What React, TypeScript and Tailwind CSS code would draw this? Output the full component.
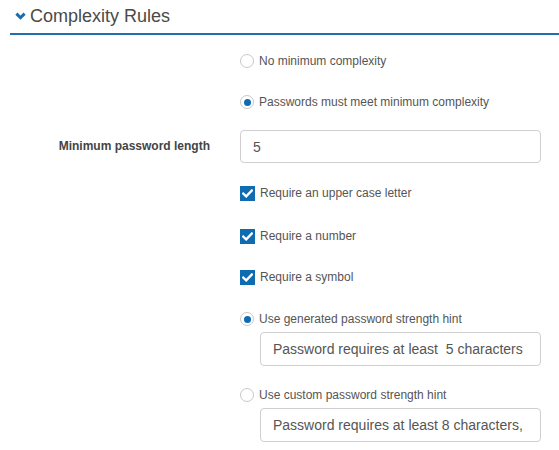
import React from "react";

const Radio = ({ checked }: { checked?: boolean }) => (
  <span className="flex h-[14px] w-[14px] shrink-0 items-center justify-center rounded-full border border-[#c8c8c8] bg-white">
    {checked && <span className="h-[7px] w-[7px] rounded-full bg-[#0b6cb3]" />}
  </span>
);

const Check = () => (
  <span className="flex h-[15px] w-[15px] shrink-0 items-center justify-center bg-[#0f6cb0]">
    <svg width="11" height="9" viewBox="0 0 11 9">
      <path d="M1.2 4.6 L4.2 7.4 L9.8 1.6" fill="none" stroke="#fff" strokeWidth="2.4" strokeLinecap="square" />
    </svg>
  </span>
);

const Row = ({ children, className = "" }: { children: React.ReactNode; className?: string }) => (
  <div className={`flex h-[20px] items-center gap-[5px] pl-[240px] text-[12px] text-[#555] ${className}`}>{children}</div>
);

export default function App() {
  return (
    <div className="h-[450px] w-[559px] overflow-hidden bg-white" style={{ fontFamily: '"Liberation Sans", Arial, sans-serif' }}>
      <div className="ml-[10px] flex h-[35px] items-center gap-[4px] border-b-2 border-[#1e70b2] pb-[2px] pl-[5px]">
        <svg width="11" height="8" viewBox="0 0 11 8" className="mt-[1px]">
          <path d="M1.4 1.6 L5.5 5.7 L9.6 1.6" fill="none" stroke="#1a6cb0" strokeWidth="3" />
        </svg>
        <span className="text-[18px] leading-none text-[#4a4a4a]">Complexity Rules</span>
      </div>

      <Row className="mt-[16px]">
        <Radio />
        <span>No minimum complexity</span>
      </Row>
      <Row className="mt-[21px]">
        <Radio checked />
        <span>Passwords must meet minimum complexity</span>
      </Row>

      <div className="mt-[18px] flex items-start">
        <label className="w-[210px] pt-[7px] text-right text-[12px] font-bold text-[#444]">Minimum password length</label>
        <input
          readOnly
          value="5"
          className="ml-[30px] h-[33px] w-[301px] rounded-[4px] border border-[#cfcfcf] px-3 text-[14px] text-[#555] outline-none"
        />
      </div>

      <Row className="mt-[20px]">
        <Check />
        <span>Require an upper case letter</span>
      </Row>
      <Row className="mt-[23px]">
        <Check />
        <span>Require a number</span>
      </Row>
      <Row className="mt-[21px]">
        <Check />
        <span>Require a symbol</span>
      </Row>

      <Row className="mt-[22px]">
        <Radio checked />
        <span>Use generated password strength hint</span>
      </Row>
      <div className="mt-[3px] pl-[260px]">
        <input
          readOnly
          value="Password requires at least  5 characters"
          className="h-[34px] w-[281px] rounded-[4px] border border-[#cfcfcf] px-3 text-[14px] text-[#555] outline-none"
        />
      </div>

      <Row className="mt-[19px]">
        <Radio />
        <span>Use custom password strength hint</span>
      </Row>
      <div className="mt-[3px] pl-[260px]">
        <input
          readOnly
          value="Password requires at least 8 characters,"
          className="h-[34px] w-[281px] rounded-[4px] border border-[#cfcfcf] px-3 text-[14px] text-[#555] outline-none"
        />
      </div>
    </div>
  );
}
